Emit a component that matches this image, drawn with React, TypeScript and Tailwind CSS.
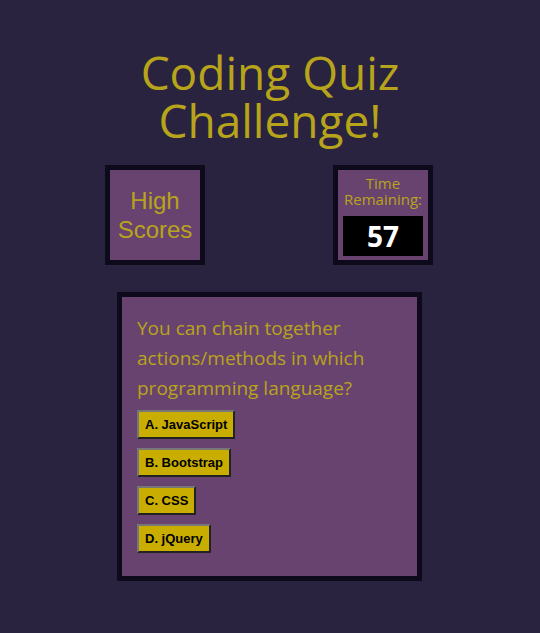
import React from "react";

const answers = ["A. JavaScript", "B. Bootstrap", "C. CSS", "D. jQuery"];

export default function App() {
  return (
    <div className="min-h-[633px] bg-[#29233f] font-['Open_Sans',sans-serif] text-[#b7a41b]">
      {/* Titel */}
      <h1 className="pt-[48px] text-center text-[46px] leading-[48px] font-normal">
        Coding Quiz
        <br />
        Challenge!
      </h1>

      {/* Knoppen bovenaan */}
      <div className="mt-[21px] flex justify-center gap-[128px] pr-[2px]">
        <div className="flex h-[100px] w-[100px] items-center justify-center border-[5px] border-[#0d0a1b] bg-[#69436f] text-center font-['Liberation_Sans',Arial,sans-serif] text-[24px] leading-[29px]">
          High
          <br />
          Scores
        </div>
        <div className="flex h-[100px] w-[100px] flex-col items-center border-[5px] border-[#0d0a1b] bg-[#69436f] pt-[5px]">
          <p className="text-center text-[15px] leading-[16px]">
            Time
            <br />
            Remaining:
          </p>
          <div className="mt-[9px] flex h-[40px] w-[80px] items-center justify-center bg-black text-[28px] font-bold text-white">
            57
          </div>
        </div>
      </div>

      {/* Vraag */}
      <div className="mt-[27px] ml-[117px] w-[305px] border-[5px] border-[#0d0a1b] bg-[#69436f] pl-[15px] pr-[15px] pt-[16px] pb-[23px]">
        <p className="text-[19px] leading-[30px]">
          You can chain together actions/methods in which programming language?
        </p>
        <div className="mt-[7px] flex flex-col items-start gap-[9px]">
          {answers.map((a) => (
            <button
              key={a}
              className="border-2 border-t-[#777] border-l-[#777] border-r-[#222] border-b-[#222] bg-[#c9ad00] px-[6px] py-[5px] font-['Liberation_Sans',Arial,sans-serif] text-[13px] leading-[15px] font-bold text-black"
            >
              {a}
            </button>
          ))}
        </div>
      </div>
    </div>
  );
}
